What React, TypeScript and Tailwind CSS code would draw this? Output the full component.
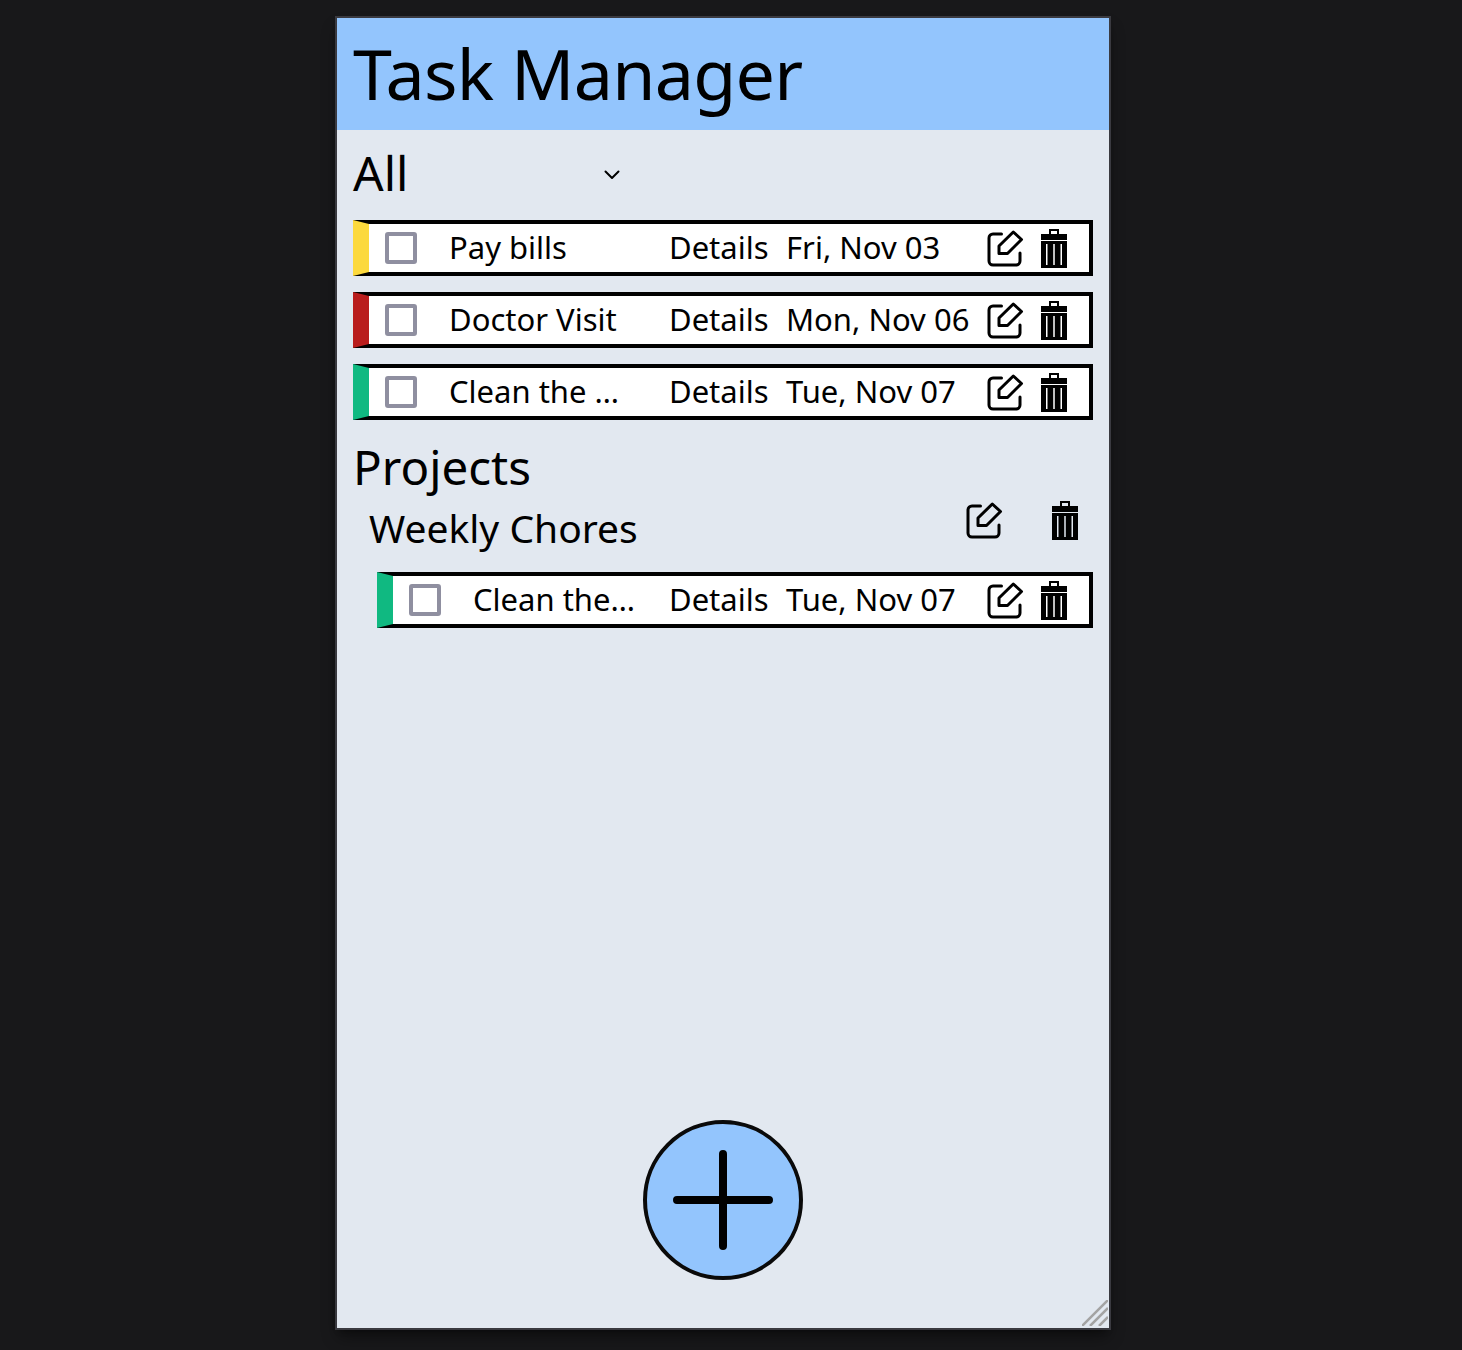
import React from "react";

function EditIcon() {
  return (
    <svg width="40" height="40" viewBox="0 0 40 40" fill="none" stroke="currentColor" strokeWidth="3" strokeLinecap="round" strokeLinejoin="round" className="shrink-0">
      <path d="M15.5 6H7a4 4 0 0 0-4 4V33a4 4 0 0 0 4 4H30a4 4 0 0 0 4-4V25" />
      <path d="M13 25.5V18L27.3 4L35.5 11.5L21.5 25.5Z" />
    </svg>
  );
}

function TrashIcon() {
  return (
    <svg width="26" height="39" viewBox="0 0 26 39" fill="currentColor" className="shrink-0">
      <path fillRule="evenodd" d="M8 0H18V5H26V11H0V5H8ZM10 2V5H16V2Z" />
      <path fillRule="evenodd" d="M0 12H26V39H0ZM5 15V36H6.5V15ZM12.25 15V36H13.75V15ZM19.5 15V36H21V15Z" />
    </svg>
  );
}

function TaskRow({ title, date, color, titleClass }: { title: string; date: string; color: string; titleClass: string }) {
  return (
    <div className={`flex h-14 items-center border-4 border-l-16 border-black bg-white text-[31px] leading-none ${color}`}>
      <div className="ml-4 size-8 shrink-0 rounded-[3px] border-4 border-[#8f8fa0] bg-white" />
      <div className={`ml-8 shrink-0 truncate pt-[2px] pb-[4px] ${titleClass}`}>{title}</div>
      <div className="w-[117px] shrink-0 pb-[2px]">Details</div>
      <div className="w-[200px] shrink-0 whitespace-nowrap pb-[2px]">{date}</div>
      <div className="flex items-center gap-[15px]">
        <EditIcon />
        <TrashIcon />
      </div>
    </div>
  );
}

export default function App() {
  return (
    <div className="flex min-h-[1350px] justify-center bg-[#18181a] pt-4 pr-4 pb-5 font-['Noto_Sans','Open_Sans',sans-serif] text-black">
      <div className="relative flex h-[1314px] w-[776px] flex-col border-2 border-[#3a3a40] bg-[#e2e8f0] shadow-lg shadow-black/40">
        <header className="flex h-[112px] shrink-0 items-center bg-[#93c5fd] pb-[3px] pl-4 text-[70px] leading-none tracking-[-0.75px]">
          Task Manager
        </header>
        <main className="flex flex-1 flex-col px-4">
          <div className="mt-5 flex h-12 w-[268px] shrink-0 items-center justify-between text-[48px] leading-none">
            <span className="-mt-[3px]">All</span>
            <svg width="18" height="18" viewBox="0 0 18 18" fill="none" stroke="currentColor" strokeWidth="2" strokeLinecap="round" strokeLinejoin="round">
              <path d="M2.5 6.5L9 13L15.5 6.5" />
            </svg>
          </div>
          <div className="mt-[22px] flex flex-col gap-4">
            <TaskRow title="Pay bills" date="Fri, Nov 03" color="border-l-[#fcd93d]" titleClass="mr-[44px] w-[176px]" />
            <TaskRow title="Doctor Visit" date="Mon, Nov 06" color="border-l-[#b91c1c]" titleClass="mr-[44px] w-[176px]" />
            <TaskRow title="Clean the house" date="Tue, Nov 07" color="border-l-[#10b981]" titleClass="mr-[44px] w-[176px]" />
          </div>
          <h2 className="mt-[23px] h-12 text-[47.5px] leading-[48px]">Projects</h2>
          <div className="flex h-[68px] items-start justify-between pl-4">
            <span className="mt-[7px] text-[39px] leading-[60px]">Weekly Chores</span>
            <div className="mt-[9px] flex items-center gap-[47px] pr-[15px]">
              <EditIcon />
              <TrashIcon />
            </div>
          </div>
          <div className="mt-[13px] pl-6">
            <TaskRow title="Clean the house" date="Tue, Nov 07" color="border-l-[#10b981]" titleClass="mr-[28px] w-[168px]" />
          </div>
          <div className="mt-auto mb-12 flex justify-center">
            <button className="flex size-40 items-center justify-center rounded-full border-4 border-[#0a0a0a] bg-[#93c5fd]">
              <svg width="100" height="100" viewBox="0 0 100 100" fill="none" stroke="currentColor" strokeWidth="8" strokeLinecap="round">
                <path d="M4 50H96M50 4V96" />
              </svg>
            </button>
          </div>
        </main>
        <svg width="26" height="26" viewBox="0 0 26 26" fill="none" stroke="#a3a3a3" strokeWidth="2.5" className="absolute right-[1px] bottom-[2px]">
          <path d="M0 26L26 0M8 26L26 8M17 26L26 17" />
        </svg>
      </div>
    </div>
  );
}
